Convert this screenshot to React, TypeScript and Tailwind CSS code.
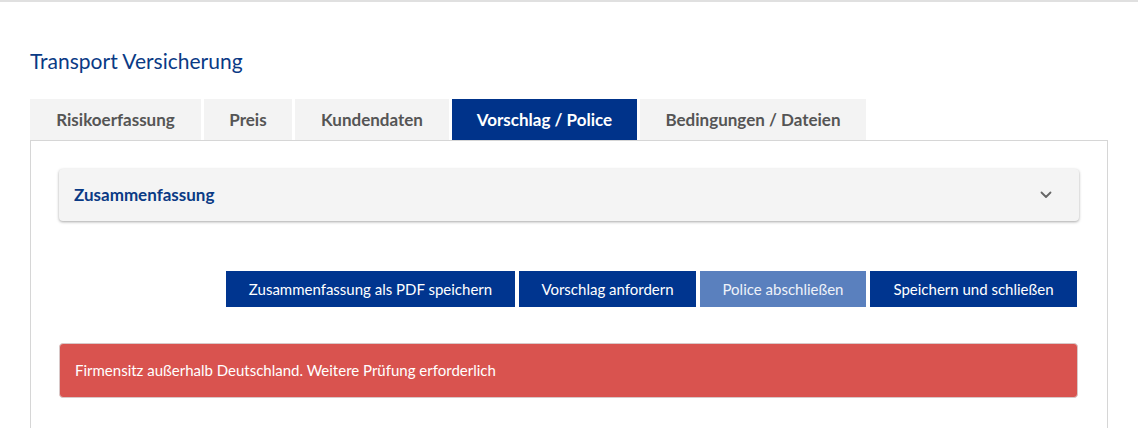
import React from "react";

const tabs = [
  { label: "Risikoerfassung", w: "w-[171px]" },
  { label: "Preis", w: "w-[88px]" },
  { label: "Kundendaten", w: "w-[154px]" },
  { label: "Vorschlag / Police", w: "w-[185px]", active: true },
  { label: "Bedingungen / Dateien", w: "w-[226px]" },
];

export default function App() {
  return (
    <div
      className="w-[1138px] h-[428px] bg-white overflow-hidden border-t-2 border-[#e0e0e0]"
      style={{ fontFamily: "Lato, 'Open Sans', sans-serif" }}
    >
      <div className="pl-[30px] pr-[30px] pt-[45px]">
        <h1 className="text-[21px] leading-[28px] text-[#0a3a85] font-normal">Transport Versicherung</h1>
        <div className="mt-[24px] flex gap-[3px]">
          {tabs.map((t) => (
            <div
              key={t.label}
              className={`${t.w} h-[41px] flex items-center justify-center text-[17px] font-bold ${
                t.active ? "bg-[#00338a] text-white" : "bg-[#f3f3f3] text-[#555555]"
              }`}
            >
              {t.label}
            </div>
          ))}
        </div>
        <div className="border border-b-0 border-[#d6d6d6] px-[28px] pt-[28px] h-[300px]">
          <div className="h-[52px] bg-[#f4f4f4] rounded-[4px] shadow-[0_1px_3px_rgba(0,0,0,0.35)] flex items-center justify-between pl-[15px] pr-[27px]">
            <span className="text-[17px] font-bold text-[#0a3a85]">Zusammenfassung</span>
            <svg width="12" height="8" viewBox="0 0 12 8" fill="none">
              <path d="M1.5 1.5 L6 6 L10.5 1.5" stroke="#666" strokeWidth="1.8" strokeLinecap="round" strokeLinejoin="round" />
            </svg>
          </div>
          <div className="mt-[50px] flex justify-end gap-[4px] pr-[2px]">
            <button className="w-[289px] h-[36px] bg-[#00358f] text-white text-[15px]">Zusammenfassung als PDF speichern</button>
            <button className="w-[177px] h-[36px] bg-[#00358f] text-white text-[15px]">Vorschlag anfordern</button>
            <button className="w-[166px] h-[36px] bg-[#5a80be] text-[#eef2f9] text-[15px]">Police abschließen</button>
            <button className="w-[207px] h-[36px] bg-[#00358f] text-white text-[15px]">Speichern und schließen</button>
          </div>
          <div className="mt-[36px] mr-[1px] h-[55px] bg-[#d9534f] border border-[#d8c8c8] rounded-[4px] flex items-center pl-[15px] text-white text-[15px]">
            Firmensitz außerhalb Deutschland. Weitere Prüfung erforderlich
          </div>
        </div>
      </div>
    </div>
  );
}
